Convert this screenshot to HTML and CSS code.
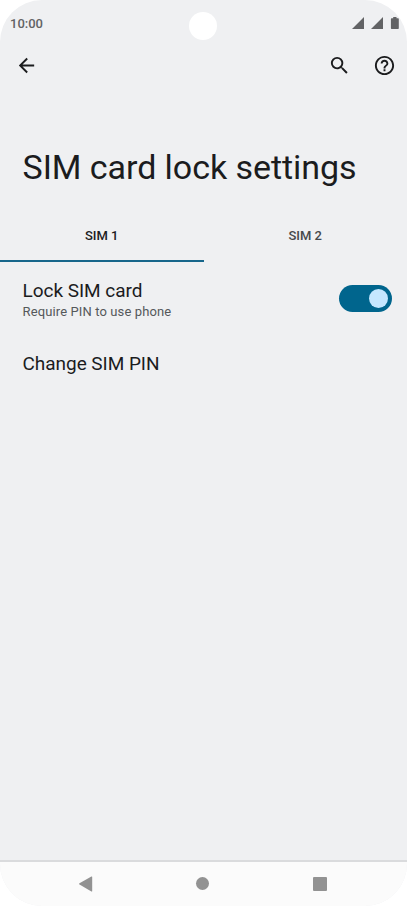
FILE: index.html
```html
<!DOCTYPE html>
<html lang="en">
<head>
<meta charset="utf-8">
<title>SIM card lock settings</title>
<link rel="stylesheet" href="styles.css">
</head>
<body>
<div class="phone">
  <header class="status">
    <span class="clock">10:00</span>
    <span class="camera"></span>
    <svg class="indicators" width="48" height="14" viewBox="0 0 48 14"><path d="M0 13 12 1v12zM19 13 31 1v12zM39.6 2.2h1.6V1h3.3v1.2h1.6q.7 0 .7.7v9.4q0 .7-.7.7h-6.5q-.7 0-.7-.7V2.9q0-.7.7-.7z"/></svg>
  </header>
  <nav class="appbar">
    <svg class="icon back" viewBox="0 0 24 24"><path d="M20 11H7.83l5.59-5.59L12 4l-8 8 8 8 1.41-1.41L7.83 13H20v-2z"/></svg>
    <svg class="icon search" viewBox="0 0 24 24"><path d="M15.5 14h-.79l-.28-.27A6.471 6.471 0 0 0 16 9.5 6.5 6.5 0 1 0 9.5 16c1.61 0 3.09-.59 4.23-1.57l.27.28v.79l5 4.99L20.49 19l-4.99-5zm-6 0C7.01 14 5 11.99 5 9.5S7.01 5 9.5 5 14 7.01 14 9.5 11.99 14 9.5 14z"/></svg>
    <svg class="icon" viewBox="0 0 24 24"><path d="M11 18h2v-2h-2v2zm1-16C6.48 2 2 6.48 2 12s4.48 10 10 10 10-4.48 10-10S17.52 2 12 2zm0 18c-4.41 0-8-3.59-8-8s3.59-8 8-8 8 3.59 8 8-3.59 8-8 8zm0-14c-2.21 0-4 1.79-4 4h2c0-1.1.9-2 2-2s2 .9 2 2c0 2-3 1.75-3 5h2c0-2.25 3-2.5 3-5 0-2.21-1.79-4-4-4z"/></svg>
  </nav>
  <h1>SIM card lock settings</h1>
  <div class="tabs">
    <div class="tab active">SIM 1</div>
    <div class="tab">SIM 2</div>
  </div>
  <main>
    <div class="row">
      <div>
        <div class="label">Lock SIM card</div>
        <div class="summary">Require PIN to use phone</div>
      </div>
      <span class="switch"></span>
    </div>
    <div class="label pin">Change SIM PIN</div>
  </main>
  <footer>
    <svg width="14" height="16" viewBox="0 0 14 16"><path d="M.5 7.3 12.4.5q.8-.4.8.5v14q0 .9-.8.5L.5 8.5q-.9-.6 0-1.2z"/></svg>
    <span class="home"></span>
    <span class="recent"></span>
  </footer>
</div>
</body>
</html>
```
FILE: styles.css
```css
* { box-sizing: border-box; }
body { margin: 0; background: #fff; font-family: Roboto, sans-serif; color: #1b1c1e; }
.phone {
  width: 407px; height: 906px; display: flex; flex-direction: column;
  background: #eff0f2; border-radius: 42px; overflow: hidden;
}
.status { height: 46px; display: flex; position: relative; padding: 0 8px 0 10px; justify-content: space-between; }
.clock { font-size: 13px; font-weight: 500; line-height: 16px; margin-top: 16px; color: #626365; }
.camera { position: absolute; left: 188.5px; top: 11.5px; width: 28px; height: 28px; border-radius: 50%; background: #fff; }
.indicators { margin-top: 16px; fill: #626365; margin-right: -1px; }
.appbar { height: 39px; display: flex; align-items: center; padding: 0 11px 0 15px; }
.icon { width: 23px; height: 23px; fill: #1b1c1e; }
.search { margin: 0 22.5px 0 auto; }
h1 { margin: 62px 0 0 22.5px; font-size: 34px; line-height: 40px; font-weight: 400; white-space: nowrap; letter-spacing: -.06px; }
.tabs { display: flex; margin-top: 23px; height: 52px; }
.tab { flex: 1; text-align: center; font-size: 13px; font-weight: 500; line-height: 52px; color: #46484b; }
.active { color: #1b1c1e; border-bottom: 2px solid #17668b; }
main { flex: 1; padding: 17px 15px 0 22.5px; }
.row { display: flex; justify-content: space-between; }
.label { font-size: 19px; line-height: 24px; letter-spacing: -.04px; }
.summary { font-size: 13px; line-height: 18px; color: #55585b; letter-spacing: .12px; }
.switch { width: 53px; height: 27px; margin-top: 6px; border-radius: 14px; background: #00658d; display: flex; align-items: center; justify-content: flex-end; padding-right: 4px; }
.switch::after { content: ""; width: 19px; height: 19px; border-radius: 50%; background: #c5e7ff; }
.pin { margin-top: 31px; }
footer { height: 46px; border-top: 2px solid #dadbdd; background: #fbfbfb; display: flex; align-items: center; padding: 0 80.5px 1px 79px; justify-content: space-between; fill: #929292; }
.home { width: 13px; height: 13px; border-radius: 50%; background: #929292; }
.recent { width: 14px; height: 14px; border-radius: 1px; background: #929292; }
```
